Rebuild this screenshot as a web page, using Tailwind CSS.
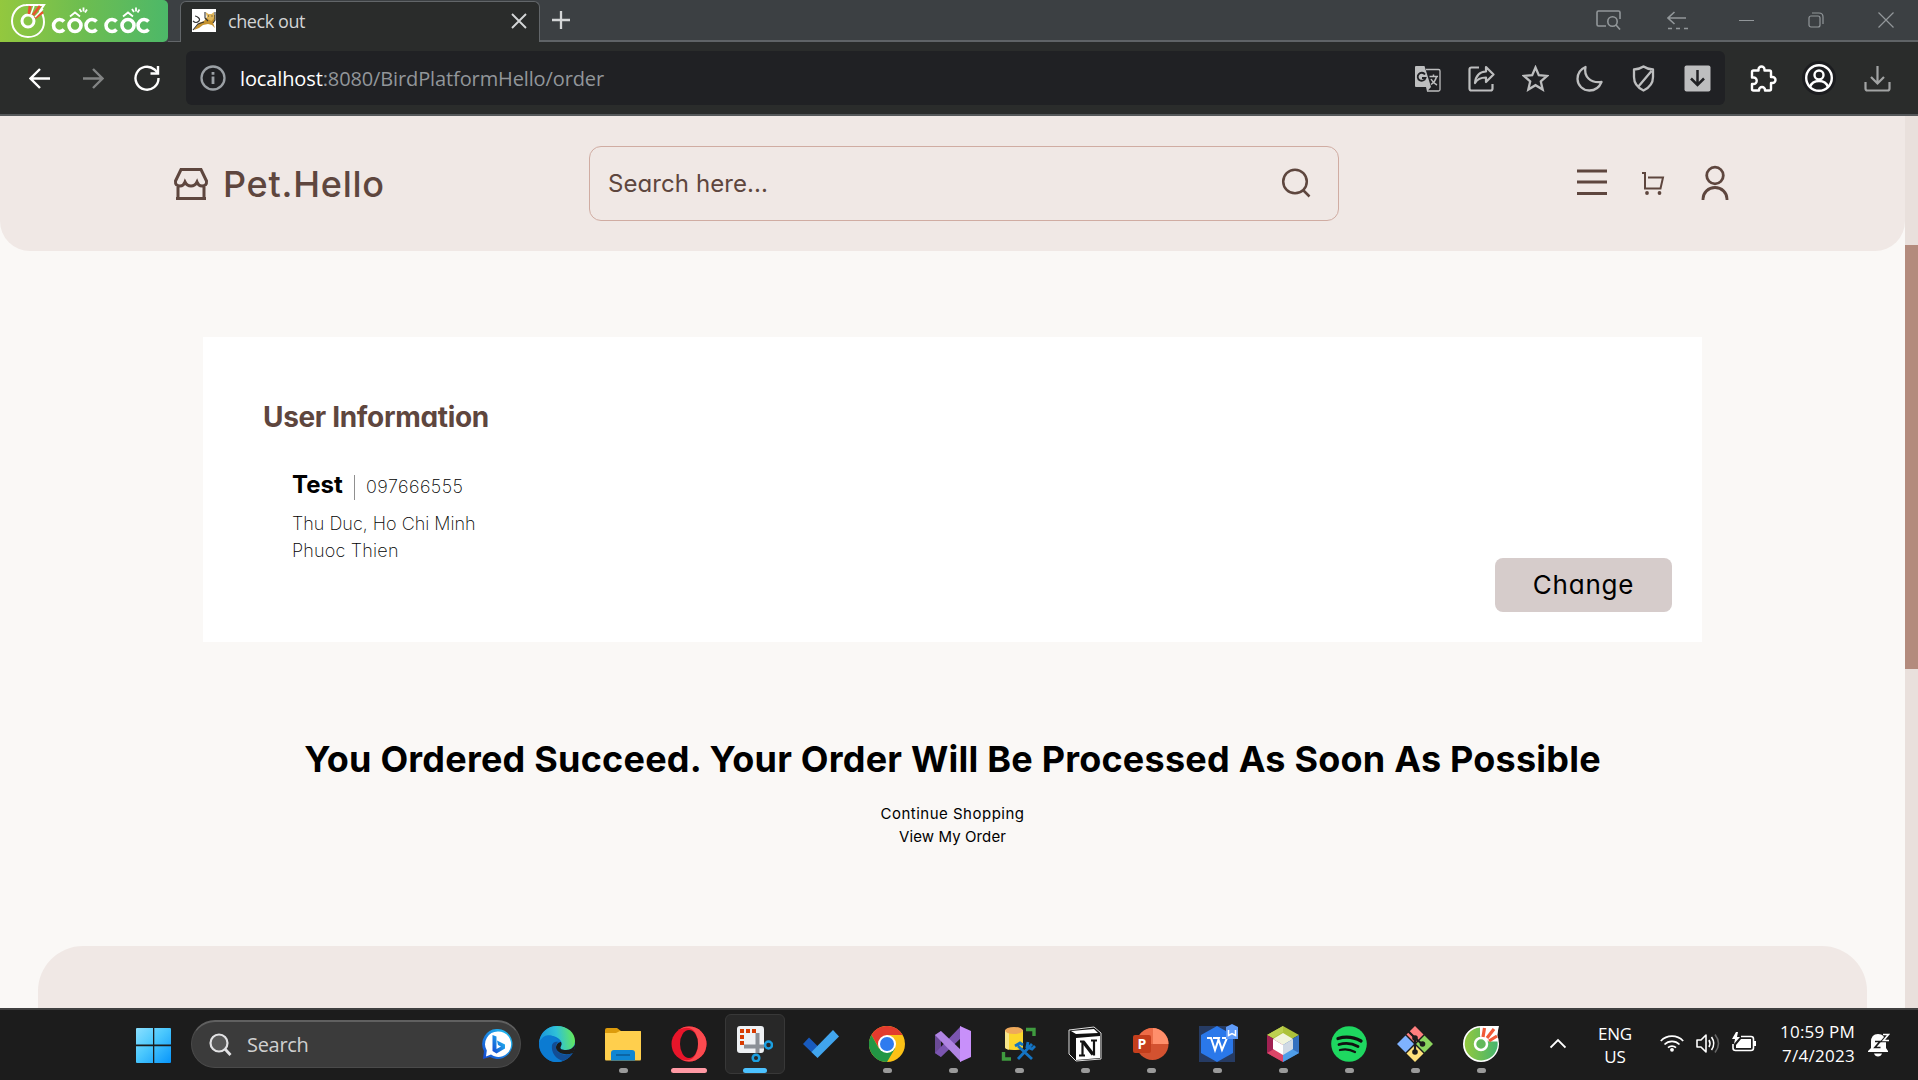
<!DOCTYPE html>
<html lang="en">
<head>
<meta charset="utf-8">
<title>check out</title>
<script src="https://cdn.jsdelivr.net/npm/@tailwindcss/browser@4"></script>
</head>
<body class="w-[1918px] h-[1080px] overflow-hidden flex flex-col bg-[#faf8f6] font-['Open_Sans',sans-serif]">

<!-- Tab strip -->
<div class="h-[42px] shrink-0 flex bg-[#3c4043]">
  <div class="w-[168px] h-[42px] rounded-r-[5px] bg-linear-to-r from-[#93c83e] via-[#6cbd50] to-[#4cb868]">
    <svg class="w-[168px] h-[42px]" viewBox="0 0 168 42" fill="none">
      <path d="M28 5C19 4 12 12 12 21c0 9 7 16 16 16s16-6 16-15c0-5-2-9-4-11l4-6H26" stroke="#fff" stroke-width="2"/>
      <circle cx="28" cy="21" r="6" stroke="#fff" stroke-width="3"/>
      <path d="M30 6l-1 8M40 6l-7 9M43 12l-8 6" stroke="#e8542f" stroke-width="2.8"/>
      <path d="M34 6l-3 8M43 9l-8 8" stroke="#fff" stroke-width="1.5"/>
      <g stroke="#fff" stroke-width="3.600">
        <path d="M64 21.500a6 6 0 1 0 0 8"/><circle cx="75" cy="25.500" r="6"/><path d="M96.500 21.500a6 6 0 1 0 0 8"/>
        <path d="M116.500 21.500a6 6 0 1 0 0 8"/><circle cx="128" cy="25.500" r="6"/><path d="M148.500 21.500a6 6 0 1 0 0 8"/>
      </g>
      <g stroke="#fff" stroke-width="1.800"><path d="M70 16.500l5-4 5 4M81.500 12l-2-3M83.500 11.500l0-4M85 12.500l2-3M123 16.500l5-4 5 4M134 12l-2-3M136 11.500l0-4M137.500 12.500l2-3"/></g>
    </svg>
  </div>
  <div class="w-[12px] border-b border-[#626669]"></div>
  <div class="w-[360px] h-[42px] mt-px flex items-center rounded-t-[6px] border-x border-t border-[#626669] bg-[#2a2c2b] pb-1">
    <svg class="w-6 h-[23px] ml-[11px]" viewBox="0 0 24 23"><path d="M0 0h24v23H0z" fill="#fff"/><path d="M2 21l5-7 5-2 3-4 0-2 3 0h3l2 0v4l-2 4 2 5-3-3-4-1-5 1-4 3z" fill="#c5922e"/><path d="M13.500 3l3 2h3l2.500-2v6l-2.500 3-4-2z" fill="#e0b65a"/><path d="M1 12c2 2 4 2 6 0s-2-5-4-5M1 21l5-6 6-2M13 3v6l3 3M23 3v8l-2 3M16 7h1M19.500 7h1" stroke="#333" stroke-width="1.100" fill="none"/></svg>
    <div class="ml-3 text-[18px] leading-6 tracking-[-0.42px] text-[#d2d4d5]">check out</div>
    <svg class="ml-auto mr-[12px] w-4 h-4" viewBox="0 0 16 16"><path d="M1 1l14 14M15 1L1 15" stroke="#d4d6d7" stroke-width="1.900"/></svg>
  </div>
  <div class="flex-1 flex items-center border-b-2 border-[#5f6366] text-[#92979a]">
    <svg class="ml-[12px] mr-auto w-[18px] h-[18px]" viewBox="0 0 18 18"><path d="M9 0v18M0 9h18" stroke="#d4d6d7" stroke-width="2.300"/></svg>
    <svg class="w-[25px] h-5 mr-[46px]" viewBox="0 0 25 20" fill="none" stroke="currentColor" stroke-width="1.600"><path d="M10 16H2.500Q1 16 1 14.500V2.500Q1 1 2.500 1h20Q24 1 24 2.500V9"/><circle cx="16.500" cy="11.500" r="4.700"/><path d="M20 15l4 4.500"/></svg>
    <svg class="w-[21px] h-[19px] mr-[51px]" viewBox="0 0 21 19" fill="none" stroke="currentColor" stroke-width="1.600"><path d="M19 7H1M7.500 1L1 7l6.500 6"/><path d="M1 17.500h20" stroke-dasharray="4 4"/></svg>
    <div class="w-[15px] h-px bg-[#92979a] mr-[54px]"></div>
    <svg class="w-4 h-4 mr-[54px]" viewBox="0 0 16 16" fill="none" stroke="currentColor" stroke-width="1.200"><rect x="1" y="4" width="11" height="11" rx="2"/><path d="M4 1h7q4 0 4 4v7"/></svg>
    <svg class="w-4 h-4 mr-[24px]" viewBox="0 0 16 16" stroke="currentColor" stroke-width="1.200"><path d="M.5 .5l15 15M15.500 .5l-15 15"/></svg>
  </div>
</div>

<!-- Toolbar -->
<div class="h-[74px] shrink-0 flex items-center bg-[#2a2c2b] border-b-2 border-[#55585a]">
  <svg class="ml-[29px] w-[21px] h-[21px]" viewBox="0 0 21 21" fill="none" stroke="#fff" stroke-width="2.400"><path d="M21 10.500H2M11 1l-9.500 9.500L11 20"/></svg>
  <svg class="ml-[33px] w-[21px] h-[21px]" viewBox="0 0 21 21" fill="none" stroke="#828484" stroke-width="2.400"><path d="M0 10.500h19M10 1l9.500 9.500L10 20"/></svg>
  <svg class="ml-[30px] w-[26px] h-[26px]" viewBox="0 0 26 26" fill="none" stroke="#fff" stroke-width="2.400"><path d="M24.500 13A11.500 11.500 0 1 1 20.500 4.500L24 8"/><path d="M24 1v7.500h-7.500"/></svg>
  <div class="ml-[26px] w-[1539px] h-[54px] rounded-[6px] bg-[#202124] flex items-center text-[20px] leading-7 text-[#92969a]">
    <svg class="ml-[14px] w-[26px] h-[26px]" viewBox="0 0 26 26" fill="none" stroke="#9ba0a5"><circle cx="13" cy="13" r="11.500" stroke-width="2.300"/><path d="M13 11.500v7.500M13 7v2.700" stroke-width="2.800"/></svg>
    <div class="ml-[14px] mt-px tracking-[-0.12px]"><span class="text-white">localhost</span>:8080/BirdPlatformHello/order</div>
    <div class="ml-auto mr-[14px] flex items-center gap-[27px] text-[#bdbebf]">
      <svg class="w-[27px] h-[27px]" viewBox="0 0 27 27"><path d="M12 4.500h12.500Q26 4.500 26 6v18.500q0 1.500-1.500 1.500H13" fill="none" stroke="currentColor" stroke-width="1.300"/><path d="M2 1h8.500l6.500 21H2Q1 22 1 21V2Q1 1 2 1zM12 22h5l-4 4.500z" fill="currentColor"/><path d="M11 9.500a4 4 0 1 0 .5 3.500H8" fill="none" stroke="#202124" stroke-width="1.800"/><path d="M15.500 11.500H24M19.500 9.500v2M22.500 11.500q-1 5-5.500 8M17 14q2 4 6 6" fill="none" stroke="currentColor" stroke-width="1.500"/></svg>
      <svg class="w-[27px] h-[27px]" viewBox="0 0 27 27" fill="none" stroke="currentColor" stroke-width="2.200"><path d="M11 2.500H3.500Q1.500 2.500 1.500 4.500v19q0 2 2 2h19q2 0 2-2V19"/><path d="M18 2l7.500 7.500L18 17v-4.500q-8 0-11 5.500 1-11 11-11.500z" stroke-linejoin="round"/></svg>
      <svg class="w-[27px] h-[27px]" viewBox="0 0 27 27" fill="none" stroke="currentColor" stroke-width="2.300"><path d="M13.500 2.500l3.300 7.700 8.200.7-6.200 5.500 1.900 8.100-7.200-4.300-7.200 4.300 1.900-8.100L2 10.900l8.200-.7z"/></svg>
      <svg class="w-[27px] h-[27px]" viewBox="0 0 27 27" fill="none" stroke="currentColor" stroke-width="2.300" stroke-linejoin="round"><path d="M9.500 2Q8 9 12.500 13.500T25.500 17Q22 25.500 13.500 25.500A11.800 11.800 0 0 1 1.500 14Q1.500 5.500 9.500 2z"/></svg>
      <svg class="w-[27px] h-[27px]" viewBox="0 0 27 27" fill="none" stroke="currentColor" stroke-width="2.300" stroke-linejoin="round"><path d="M13.500 1.500Q17 4 23 4.500V12q0 9-9.500 13.500Q4 21 4 12V4.500Q10 4 13.500 1.500zM21.500 6L8 22"/></svg>
      <svg class="w-[27px] h-[27px]" viewBox="0 0 27 27"><rect x=".5" y=".5" width="26" height="26" rx="2" fill="currentColor"/><path d="M13.500 5v15M7 13.500l6.500 6.500 6.500-6.500" fill="none" stroke="#202124" stroke-width="2.500"/></svg>
    </div>
  </div>
  <svg class="ml-[25px] w-[27px] h-[27px]" viewBox="0 0 27 27" fill="none" stroke="#fff" stroke-width="2.400" stroke-linejoin="round"><path d="M3.500 5.500h5V4.500a3 3 0 0 1 6 0v1h5Q21 5.500 21 7v5h1.500a3 3 0 0 1 0 6H21v6q0 1.500-1.500 1.500H15V25a3 3 0 0 0-6 0v.5H3.500Q2 25.500 2 24v-5h1.500a3 3 0 0 0 0-6.500H2V7Q2 5.500 3.500 5.500z"/></svg>
  <svg class="ml-[25px] w-[34px] h-[34px]" viewBox="0 0 34 34" fill="none" stroke="#fff" stroke-width="2.400"><circle cx="17" cy="17" r="17" fill="#1c1d20" stroke="none"/><circle cx="17" cy="17" r="12.800"/><circle cx="17" cy="14" r="4.500"/><path d="M8 26q2-6 9-6t9 6"/></svg>
  <svg class="ml-[28px] w-[27px] h-[27px]" viewBox="0 0 27 27" fill="none" stroke="#a2a4a4" stroke-width="2.200"><path d="M13.500 1v17M7 12l6.500 6.500L20 12M1.500 17v6.500q0 2 2 2h20q2 0 2-2V17"/></svg>
</div>

<!-- Page -->
<div class="h-[892px] shrink-0 flex font-['Inter',sans-serif] [font-feature-settings:'cv11']">
  <div class="w-[1905px] h-[892px] overflow-hidden flex flex-col">
    <header class="h-[135px] shrink-0 rounded-b-[30px] bg-[#f0e8e5] flex items-center text-[#5e463e]">
      <svg class="ml-[173px] w-9 h-9" viewBox="0 0 36 36" fill="none" stroke="currentColor" stroke-width="3"><path d="M8 3.500h20l5.500 11.500q.5 5-4.500 5-3.500 0-5-4-2 4-6 4t-6-4q-1.500 4-5 4-5 0-4.500-5zM5 20v13M31 20v13M3 32.500h30"/></svg>
      <div class="ml-[14px] w-[165px] text-[36px] leading-[44px] font-medium tracking-[0.75px] whitespace-nowrap">Pet.Hello</div>
      <div class="ml-[201px] w-[750px] h-[75px] rounded-[12px] border border-[#d0aca2] flex items-center justify-between pl-[18px] pr-[27px]">
        <span class="text-[24px] leading-8 tracking-[0.08px]">Search here...</span>
        <svg class="w-[30px] h-[30px] -mt-px" viewBox="0 0 30 30" fill="none" stroke="currentColor" stroke-width="2.500"><circle cx="14" cy="13.500" r="11.800"/><path d="M22 22l6.500 6.500"/></svg>
      </div>
      <svg class="ml-[238px] w-[30px] h-[30px] -mt-[3px]" viewBox="0 0 30 30" stroke="currentColor" stroke-width="2.800"><path d="M0 4h30M0 15h30M0 26.500h30"/></svg>
      <svg class="ml-[34px] w-6 h-6 -mt-px" viewBox="0 0 24 24" fill="none" stroke="currentColor" stroke-width="2"><path d="M1 2h3v15.500h15.500L22 6.500H7"/><circle cx="6" cy="22" r="1.900" fill="currentColor" stroke="none"/><circle cx="18.500" cy="22" r="1.900" fill="currentColor" stroke="none"/></svg>
      <svg class="ml-[36px] w-7 h-9 -mt-[2px]" viewBox="0 0 28 36" fill="none" stroke="currentColor" stroke-width="2.800"><circle cx="14" cy="10.500" r="8.300"/><path d="M2 35v-1a12 11.500 0 0 1 24 0v1"/></svg>
    </header>

    <section class="mt-[86px] ml-[203px] w-[1499px] h-[305px] shrink-0 bg-white flex flex-col pt-[59px] px-[60px]">
      <h2 class="text-[28px] leading-[42px] font-bold tracking-[-0.33px] text-[#5e463e]">User Information</h2>
      <div class="mt-[31px] ml-[29px] flex items-center h-[32px]">
        <span class="w-[62px] text-[24px] leading-8 font-bold text-black">Test</span>
        <span class="w-px h-[25px] mt-1 bg-[#909090]"></span>
        <span class="ml-[11px] mt-1 text-[18px] leading-7 font-extralight tracking-[0.45px] text-black">097666555</span>
      </div>
      <div class="mt-[9px] ml-[29px] text-[18px] leading-[27px] font-extralight text-black">
        <p>Thu Duc, Ho Chi Minh</p>
        <p class="tracking-[0.2px]">Phuoc Thien</p>
      </div>
      <button class="-mt-[6px] -mr-[30px] self-end w-[177px] h-[54px] shrink-0 rounded-[8px] bg-[#d6cccb] pb-px text-[26px] leading-[36px] tracking-[0.8px] text-black">Change</button>
    </section>

    <section class="mt-[90px] flex flex-col items-center text-black">
      <h1 class="text-[36px] leading-[54px] font-bold tracking-[0.22px] whitespace-nowrap">You Ordered Succeed. Your Order Will Be Processed As Soon As Possible</h1>
      <a class="mt-[16px] text-[15px] leading-[23px] tracking-[0.5px]">Continue Shopping</a>
      <a class="text-[15px] leading-[23px] tracking-[0.1px]">View My Order</a>
    </section>

    <footer class="mt-[98px] mx-[38px] h-[100px] shrink-0 rounded-t-[45px] bg-[#f0e8e5]"></footer>
  </div>
  <div class="w-[13px] bg-[#e9e0dc] pt-[129px]"><div class="h-[424px] bg-[#b38b7d]"></div></div>
</div>

<!-- Taskbar -->
<div class="h-[72px] shrink-0 flex bg-[#1c1c1c] border-t-2 border-[#404040] text-white">
  <div class="flex items-center w-[1517px] shrink-0">
    <svg class="ml-[136px] w-[35px] h-[35px] shrink-0" viewBox="0 0 35 35"><defs><linearGradient id="w" x2="1" y2="1"><stop stop-color="#8be0ff"/><stop offset=".45" stop-color="#4bc8fd"/><stop offset="1" stop-color="#0795fb"/></linearGradient></defs><path d="M1 0h16v16.500H0V1q0-1 1-1zM18.300 0H34q1 0 1 1v15.500H18.300zM0 18.300h17V35H1q-1 0-1-1zM18.300 18.300H35V34q0 1-1 1H18.300z" fill="url(#w)"/></svg>
    <div class="ml-5 mb-[2px] w-[330px] shrink-0 h-12 rounded-full bg-[#3b3b3b] border border-t-2 border-[#4a4a4a] border-t-[#606060] flex items-center">
      <svg class="ml-[17px] w-[23px] h-[23px]" viewBox="0 0 23 23" fill="none" stroke="#e2e2e4" stroke-width="2.200"><circle cx="10" cy="10" r="8.500" fill="#595959"/><path d="M16 16l5.500 6" stroke-width="2.800"/></svg>
      <span class="ml-[15px] text-[20px] leading-7 tracking-[-0.300px] text-[#d0d0d0]">Search</span>
      <svg class="ml-auto mr-[7px] w-[31px] h-[31px]" viewBox="0 0 31 31"><defs><linearGradient id="b" x1="1" x2="0" y2="1"><stop stop-color="#23c9f2"/><stop offset="1" stop-color="#1446d2"/></linearGradient></defs><path d="M16 0a15 15 0 1 1-8 28L1 30l1-8A15 15 0 0 1 16 0z" fill="url(#b)"/><path d="M16 2.500a12.700 12.700 0 1 1-7 23l-5 2 .8-6A12.700 12.700 0 0 1 16 2.500z" fill="#fff"/><path d="M10.500 6l4 1.500v12.500l4.500-2.500-3-1.500-1-4.500 8 4v4l-8.500 5-4-2.500z" fill="url(#b)"/></svg>
    </div>
    <div class="ml-[6px] flex h-[70px]">
      <div class="w-[66px] flex flex-col items-center pt-4"><svg class="w-9 h-9 ml-[-6px]" viewBox="0 0 36 36"><defs><linearGradient id="e" y1=".5" y2=".4"><stop stop-color="#1893dd"/><stop offset=".5" stop-color="#2fc1d8"/><stop offset="1" stop-color="#66ea57"/></linearGradient></defs><circle cx="18" cy="18" r="18" fill="#0d74cc"/><path d="M0 17C1 6 9 0 18 0c11 0 18 7 18 15 0 6-4 9-9 9-4 0-7-1-5-4 2-2 0-7-5-9Q7 6 0 17z" fill="url(#e)"/><path d="M0 17Q4 8 11 9.500c5 .5 8 4 9 6.500-5-2-8 2-7 7 1 6 6 10 12 11.500Q14 39 6 31 0 25 0 17z" fill="#0c7bd2"/><path d="M13 19c-1 8 4 14 11 16 5-2 8-5 10-8-9 4-17 0-17-6 0-3 1-5 3-5-3-1-6 0-7 3z" fill="#134d94"/><path d="M22 20c-2 3 1 4 5 4 4 0 7-2 9-5 0 4-1 6-2 8-8 3-16 0-17-5 0-4 3-6 5-6q1 2 0 4z" fill="#1c1c1c"/></svg></div>
      <div class="w-[66px] flex flex-col items-center pt-4"><svg class="w-9 h-9 ml-[-6px]" viewBox="0 0 36 36"><path d="M0 4q0-2 2-2h10l4 3h20v8H0z" fill="#dc9b0c"/><path d="M0 7h11l4-2h20q1 0 1 1v27q0 1.500-1 1.500H1q-1 0-1-1.500z" fill="#ffcf4d"/><path d="M6 34.500V27q0-3 3-3h18q3 0 3 3v7.500z" fill="#0f86d3"/><path d="M11 29h14" stroke="#0b5a96" stroke-width="1.500"/></svg><div class="ml-[-6px] mt-[6px] w-[9px] h-[5px] rounded-full bg-[#9a9a9a]"></div></div>
      <div class="w-[66px] flex flex-col items-center pt-4"><svg class="w-9 h-9 ml-[-6px]" viewBox="0 0 36 36"><ellipse cx="18" cy="18" rx="17.500" ry="17.500" fill="#e8152a"/><path d="M18 .5c-4 0-7 1-9 3Q16 0 22 4q5 5 5 14t-5 14q-5 4-12 1 4 2.500 8 2.500a17.500 17.500 0 0 0 0-35z" fill="#fb4a4f"/><ellipse cx="18" cy="18" rx="9" ry="14" fill="#1c1c1c"/></svg><div class="ml-[-6px] mt-[6px] w-9 h-[5px] rounded-full bg-[#ff99a4]"></div></div>
      <div class="w-[66px] flex flex-col pt-1"><div class="w-[60px] h-[60px] rounded-[6px] border border-[#383838] bg-[#282828] flex flex-col items-center pt-[11px]"><svg class="w-9 h-9" viewBox="0 0 36 36"><rect width="27" height="27" rx="3" fill="#eef1f4"/><g fill="#d83b01"><path d="M3 3h4v4H3zM9 3h4v4H9zM15 3h4v4h-4zM3 9h4v4H3zM3 15h4v4H3z"/></g><path d="M20.500 7v20M7 20.500h20" stroke="#8b9097" stroke-width="4"/><g fill="none" stroke="#1ba0e2" stroke-width="2.500"><circle cx="31.500" cy="19" r="3.500"/><circle cx="19" cy="32" r="3.300"/></g></svg><div class="mt-[6px] w-6 h-[5px] shrink-0 rounded-full bg-[#4cc2ff]"></div></div></div>
      <div class="w-[66px] flex flex-col items-center pt-4"><svg class="w-9 h-9 ml-[-6px]" viewBox="0 0 36 36"><path d="M0 18l6-6.500 12 12L12.500 30z" fill="#185abd"/><path d="M8.500 26L30 4l6 6.500L14.500 32z" fill="#41a5ee"/></svg></div>
      <div class="w-[66px] flex flex-col items-center pt-4"><svg class="w-9 h-9 ml-[-6px]" viewBox="0 0 36 36"><circle cx="18" cy="18" r="18" fill="#fbc116"/><path d="M2.400 9A18 18 0 0 1 33.600 9H18l-8 13z" fill="#e33b2e"/><path d="M2.400 9A18 18 0 0 0 18 36l8-13.500-8-4-8 4z" fill="#229644"/><circle cx="18" cy="18" r="9" fill="#fff"/><circle cx="18" cy="18" r="7" fill="#2f7bef"/></svg><div class="ml-[-6px] mt-[6px] w-[9px] h-[5px] rounded-full bg-[#9a9a9a]"></div></div>
      <div class="w-[66px] flex flex-col items-center pt-4"><svg class="w-9 h-9 ml-[-6px]" viewBox="0 0 36 36"><path d="M0 9l6-4v26l-6-4z" fill="#6a4a95"/><path d="M0 27l6 4L26 12V0z" fill="#7b55b0"/><path d="M0 9l6-4 20 19v12z" fill="#b084e2"/><path d="M25 0l11 5v26l-11 5z" fill="#c890fa"/></svg><div class="ml-[-6px] mt-[6px] w-[9px] h-[5px] rounded-full bg-[#9a9a9a]"></div></div>
      <div class="w-[66px] flex flex-col items-center pt-4"><svg class="w-9 h-9 ml-[-6px]" viewBox="0 0 36 36"><path d="M4 4v17q0 3 9 3t9-3V4z" fill="#fbd62c"/><path d="M4 4v17q0 2 4 2.700V6z" fill="#f7e58a"/><ellipse cx="13" cy="4.500" rx="9" ry="3.500" fill="#eea95b"/><path d="M25 3.500h8V10M2.500 26v7H10" fill="none" stroke="#3f9b3f" stroke-width="3.400"/><path d="M17 20l14 13M31 18L17 33M14 20l5-3 3 2M27 16l-1 5 5 2 3-3" fill="none" stroke="#1474c4" stroke-width="2.800"/></svg><div class="ml-[-6px] mt-[6px] w-[9px] h-[5px] rounded-full bg-[#9a9a9a]"></div></div>
      <div class="w-[66px] flex flex-col items-center pt-4"><svg class="w-9 h-9 ml-[-6px]" viewBox="0 0 36 36"><path d="M2 4l25-3 7 6v26l-25 2-7-7z" fill="#111" stroke="#ddd"/><path d="M4 5l23-2 4 4-22 1zM9 12l24-2v22L9 34z" fill="#fff"/><path d="M16 15.500l10 13" stroke="#111" stroke-width="3.500"/><path d="M15.500 15v14M27 14.500v15M12 29.500h6M24 14.500h6M13 15.500h4" stroke="#111" stroke-width="2.200" fill="none"/></svg><div class="ml-[-6px] mt-[6px] w-[9px] h-[5px] rounded-full bg-[#9a9a9a]"></div></div>
      <div class="w-[66px] flex flex-col items-center pt-4"><svg class="w-9 h-9 ml-[-6px]" viewBox="0 0 36 36"><circle cx="19.500" cy="18" r="16" fill="#d35230"/><path d="M19.500 2a16 16 0 0 1 16 16h-16z" fill="#ff8f6b"/><path d="M19.500 2a16 16 0 0 0-16 16h16z" fill="#ed6c47"/><rect y="9" width="18" height="18" rx="2" fill="#c43e1c"/><text x="9" y="23" font-size="14" font-weight="700" fill="#fff" text-anchor="middle">P</text></svg><div class="ml-[-6px] mt-[6px] w-[9px] h-[5px] rounded-full bg-[#9a9a9a]"></div></div>
      <div class="w-[66px] flex flex-col items-center pt-4"><svg class="w-10 h-9 overflow-visible ml-[-2px]" viewBox="0 0 40 36"><path d="M0 0h36v36H0z" fill="#263b63"/><path d="M18 0l16 9v18l-16 9L2 27V9z" fill="#2a78ea"/><path d="M8 12h4l4 12 4-12h-6M19 12l4 12 5-12h-5" fill="none" stroke="#fff" stroke-width="2"/><path d="M27 1l6-3 6 3v12H27z" fill="#5f9bf8"/><path d="M29.500 4v5.500l3.500-2 3.500 2V4" fill="none" stroke="#fff" stroke-width="1.500"/></svg><div class="ml-[-6px] mt-[6px] w-[9px] h-[5px] rounded-full bg-[#9a9a9a]"></div></div>
      <div class="w-[66px] flex flex-col items-center pt-4"><svg class="w-9 h-9 ml-[-6px]" viewBox="0 0 36 36"><path d="M18 0l16 9-16 9L2 9z" fill="#adc23a"/><path d="M18 0L2 9l6 3 10-6z" fill="#bdd04f"/><path d="M2 9l16 9v18L2 27z" fill="#a12152"/><path d="M2 27l16-9v18z" fill="#dd4668"/><path d="M34 9l-16 9v18l16-9z" fill="#3470bf"/><path d="M34 27l-16-9v18z" fill="#4f9de8"/><path d="M18 7l10 6-10 6-10-6z" fill="#f1f4dc"/><path d="M8 13l10 6v10L8 23z" fill="#fff"/><path d="M28 13l-10 6v10l10-6z" fill="#d0d9e4"/></svg><div class="ml-[-6px] mt-[6px] w-[9px] h-[5px] rounded-full bg-[#9a9a9a]"></div></div>
      <div class="w-[66px] flex flex-col items-center pt-4"><svg class="w-9 h-9 ml-[-6px]" viewBox="0 0 36 36"><circle cx="18" cy="18" r="17.800" fill="#1ed760"/><g fill="none" stroke="#111" stroke-linecap="round"><path d="M7 12.500q12-3.500 23 2.500" stroke-width="3.300"/><path d="M8 18.500q10-3 19 2" stroke-width="2.800"/><path d="M9 24q8-2 15 2" stroke-width="2.300"/></g></svg><div class="ml-[-6px] mt-[6px] w-[9px] h-[5px] rounded-full bg-[#9a9a9a]"></div></div>
      <div class="w-[66px] flex flex-col items-center pt-4"><svg class="w-9 h-9 ml-[-6px]" viewBox="0 0 36 36"><path d="M18 0l8.500 8.500L18 17 9.500 8.500z" fill="#ff7e7e"/><path d="M8.500 9.500L17 18l-8.500 8.500L0 18z" fill="#7fb2ff"/><path d="M27.500 9.500L36 18l-8.500 8.500L19 18z" fill="#8bd45f"/><path d="M18 19l8.500 8.500L18 36l-8.500-8.500z" fill="#ffe27c"/><path d="M11 5l7 7v14M18 12l7 6" stroke="#1c1c1c" stroke-width="2.200" fill="none"/><circle cx="18" cy="12" r="2.800" fill="#1c1c1c"/><circle cx="25.500" cy="18" r="2.800" fill="#1c1c1c"/><circle cx="18" cy="26" r="2.800" fill="#1c1c1c"/></svg><div class="ml-[-6px] mt-[6px] w-[9px] h-[5px] rounded-full bg-[#9a9a9a]"></div></div>
      <div class="w-[66px] flex flex-col items-center pt-4"><svg class="w-9 h-9 ml-[-6px]" viewBox="0 0 36 36"><defs><linearGradient id="c"><stop stop-color="#93c83e"/><stop offset="1" stop-color="#45b56e"/></linearGradient></defs><path d="M18 0h18l-2 9q2 4 2 9A18 18 0 1 1 18 0z" fill="#fff"/><path d="M17 1.500v9l9 5 8.500 0A16.500 16.500 0 1 1 17 1.500z" fill="url(#c)"/><path d="M18 1h17l-1 14-13-3z" fill="#fff"/><circle cx="18" cy="18" r="6" fill="#62b95a" stroke="#fff" stroke-width="2.500"/><path d="M21.500 2l-1.500 9M31 3l-7 9M34 10l-8 5" stroke="#f15a38" stroke-width="3.200"/></svg><div class="ml-[-6px] mt-[6px] w-[9px] h-[5px] rounded-full bg-[#9a9a9a]"></div></div>
    </div>
  </div>
  <svg class="ml-[33px] mt-[28px] w-4 h-[11px]" viewBox="0 0 16 11" fill="none" stroke="#fff" stroke-width="1.900"><path d="M.5 9.500L8 2l7.500 7.500"/></svg>
  <div class="ml-[29px] w-10 mt-[12px] text-center text-[17px] leading-[23px] tracking-[-0.2px]"><p>ENG</p><p>US</p></div>
  <svg class="ml-[25px] mt-[24px] w-6 h-[18px]" viewBox="0 0 24 18" fill="none" stroke="#fff" stroke-width="1.700"><path d="M.8 7a15.500 15.500 0 0 1 22.400 0M4.500 10.500a10.500 10.500 0 0 1 15 0M8 13.700a5.700 5.700 0 0 1 8 0"/><circle cx="12" cy="15.800" r="1.900" fill="#fff" stroke="none"/></svg>
  <svg class="ml-[12px] mt-[23px] w-6 h-[21px]" viewBox="0 0 24 21" fill="none" stroke="#fff" stroke-width="1.600"><path d="M1 7h4l5-5v17l-5-5H1z" stroke-linejoin="round"/><path d="M13 7q2 3.500 0 7M15.500 4q4.500 6.500 0 13"/><path d="M19 1.500q7 9 0 18" stroke="#666"/></svg>
  <svg class="ml-[12px] mt-[22px] w-6 h-5" viewBox="0 0 24 20"><path d="M9 4.500h10q2.500 0 2.500 2.500v9q0 2.500-2.500 2.500H3.500Q1 18.500 1 16v-4" fill="none" stroke="#fff" stroke-width="1.600"/><path d="M9 7h10v9H4v-3zM22 9h2v5h-2zM4 0L0 7h3l-1 5 6-7H5l1-5z" fill="#fff"/></svg>
  <div class="mt-[10px] w-[99px] text-right text-[17px] leading-6 whitespace-nowrap"><p class="tracking-[0.2px]">10:59 PM</p><p class="tracking-[0.27px]">7/4/2023</p></div>
  <svg class="ml-[13px] mt-[23px] w-[22px] h-[24px]" viewBox="0 0 22 24"><path d="M3 9q0-8 7-8t8 8v6l2 3v1H0v-1l3-3zM6 20.500h8q-1 3-4 3t-4-3z" fill="#fff"/><path d="M7 8.500h5l-5 6h5.500" fill="none" stroke="#1c1c1c" stroke-width="1.700"/><path d="M15 1.500h5.500l-5 6H21" fill="none" stroke="#1c1c1c" stroke-width="3.600"/><path d="M15 1.500h5.500l-5 6H21" fill="none" stroke="#fff" stroke-width="1.600"/></svg>
</div>
</body>
</html>
